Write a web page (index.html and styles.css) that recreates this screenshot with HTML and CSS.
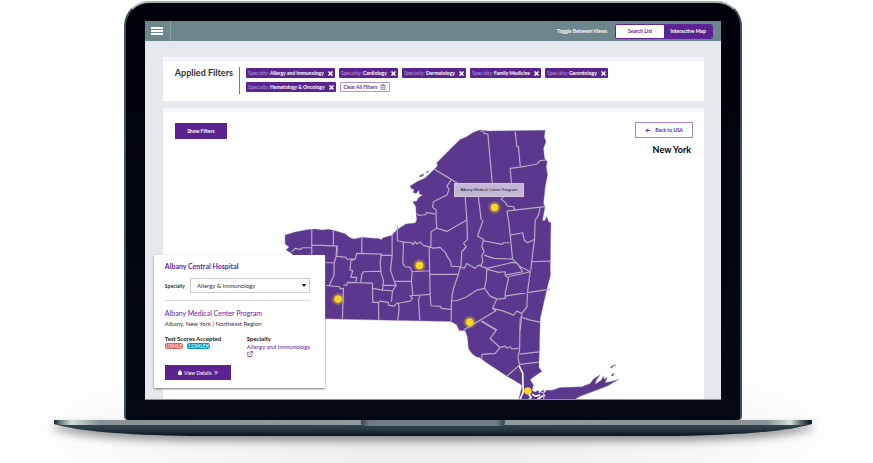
FILE: index.html
```html
<!DOCTYPE html>
<html lang="en">
<head>
<meta charset="utf-8">
<meta name="viewport" content="width=device-width, initial-scale=1">
<title>Residency program map</title>
<link rel="stylesheet" href="styles.css">
</head>
<body>
<main class="laptop">
  <div class="lid">
    <div class="screen">
      <header class="topbar">
        <button class="menu" aria-label="Menu"><span></span><span></span><span></span></button>
        <span class="toggle-label">Toggle Between Views</span>
        <div class="toggle">
          <button class="toggle-btn">Search List</button>
          <button class="toggle-btn active">Interactive Map</button>
        </div>
      </header>
      <div class="content">
        <section class="panel filters">
          <h2 class="filters-title">Applied Filters</h2>
          <div class="chips">
            <button class="chip"><span>Specialty:</span><b>Allergy and Immunology</b><svg viewBox="0 0 10 10"><path d="M1 1l8 8M9 1l-8 8"/></svg></button>
            <button class="chip"><span>Specialty:</span><b>Cardiology</b><svg viewBox="0 0 10 10"><path d="M1 1l8 8M9 1l-8 8"/></svg></button>
            <button class="chip"><span>Specialty:</span><b>Dermatology</b><svg viewBox="0 0 10 10"><path d="M1 1l8 8M9 1l-8 8"/></svg></button>
            <button class="chip"><span>Specialty:</span><b>Family Medicine</b><svg viewBox="0 0 10 10"><path d="M1 1l8 8M9 1l-8 8"/></svg></button>
            <button class="chip"><span>Specialty:</span><b>Gerontology</b><svg viewBox="0 0 10 10"><path d="M1 1l8 8M9 1l-8 8"/></svg></button>
            <button class="chip"><span>Specialty:</span><b>Hematology &amp; Oncology</b><svg viewBox="0 0 10 10"><path d="M1 1l8 8M9 1l-8 8"/></svg></button>
            <button class="chip clear"><b>Clear All Filters</b><svg viewBox="0 0 12 12"><path d="M1 3h10M4 3V1h4v2M2 3v8h8V3M4.500 5v4M7.500 5v4"/></svg></button>
          </div>
        </section>
        <section class="panel stage">
          <svg class="map" viewBox="163 108 541 291" role="img" aria-label="Map of New York counties">
            <defs>
              <radialGradient id="glow"><stop offset=".4" stop-color="#ffd61f" stop-opacity=".6"/><stop offset="1" stop-color="#ffd61f" stop-opacity="0"/></radialGradient>
            </defs>
            <path class="land" d="M285 235L295 232 301.700 230.700 308 229.500 315 229 321.700 230 328.300 229.300 335 230.700 345 233.700 350 237.700 354 239 361.700 237.300 380 238.700 381 240.300 382.300 238 391.700 235.300 396.700 229.700 405.700 224 415 223 416.700 220 416 214 415.700 206.700 412.700 201.700 416.700 201 418 198 422.300 195 419 194 419 190 416 193.500 413 192.500 414 189.500 411 188.500 410 186 416.700 181.700 425 178 433.300 170 437.300 166 436.700 162.700 443.300 156 455 144.300 460 139.500 466 137 472 133 477.300 130.700 480 130 488 131 545 130.300 544 136.700 545.700 141.700 543.300 148.300 544.300 158.300 547 161.700 546 166.700 547.300 175 545 186.700 544 196 543.300 203.300 544.700 207.300 542.300 220 544 221 546.700 216.700 548.300 221.700 550.700 222.700 550 270 550.300 275 546.700 289 540 318.300 538.700 367.300 541.700 371 530 379.300 533.300 385 531.700 390 535 392 538 390 539 393 543 389.500 544 393 546 390 552 390 560 387.300 581.700 386.700 590 383.300 593 379 600 374.500 596 380 595 384 601 380 603 376 604 379 607 377 605 382.500 612 381 618.300 379.300 606.700 386 593.300 391 580 396 573.300 400 518.300 400 521.700 386.700 520.700 384.300 506.700 376 485 361.700 480 357.700 476 356.500 471.700 353.300 468.300 348.300 467.300 336.700 465 330.700 459 330.300 456.700 325 451 321.300 380 320 326 318.700 300 318 300 262 291 253 286 250 289 247 285 244Z"/>
            <path class="land" d="M419 176l4-2 1 1-4 2zM426 172l3-1-2 2zM610 367l3-2 3 0-3 1-2 2zM611 375l2-2 1 1-2 2z"/>
            <path class="water" d="M518.500 365L522.500 373 523 392 519.500 400M531 391l-2 4 2 2-3 3M532 394l3 2 5-1M545 395l-3 1-6 4"/>
            <g class="county" transform="translate(275 120) scale(.33333)">
              <path d="M110 328V420M110 376H140M50 395L60 385 75 388 83 383H110"/>
            </g>
            <g class="county" transform="translate(400 120) scale(.33333)">
              <path d="M240 33L250 33 252 40 263 42 277 200M345 35L350 80 355 80 360 138M438 120L420 122 410 132 380 138 330 145 334 195 305 203 313 225 303 238 315 247 322 258 340 260 344 270M434 260L320 273 325 300M233 220L237 250 243 300M103 148L190 200 195 230 200 300M153 180L140 198 147 208 140 225 100 245 97 262 108 270 108 300M50 280L55 286 75 284 80 277 105 282M420 262L415 285 405 300"/>
            </g>
            <g class="county" transform="translate(320 220) scale(.33333)">
              <path d="M0 76L52 78 50 105M40 33V76M125 52V100M216 45V106M50 78L48 108 78 112 80 117 105 117 110 100 185 102 183 106H215M15 128H42M48 110L42 128V165L28 195M18 196L58 200 60 206 70 205 67 295M70 195H80L82 187 157 189V205M105 117L92 122 90 150 98 152 92 172H110L107 187M122 187L125 163 130 155 183 153M183 106L180 130 183 160 190 180 187 210M157 205L187 210 217 212 214 245M157 205L158 247H175L176 299M175 247L180 243 205 247V255L222 258 230 250 243 248 270 243 277 235 270 227 332 223M216 106L211 150 222 183 274 184M222 183L228 196H190M228 196L217 212M274 184L276 155 327 152M274 184L278 226M327 82L330 223 332 257 362 259 363 265 392 268M231 15L232 62 250 66 248 130 255 140 270 142 276 155M250 66L275 68 278 74 285 65 290 72 300 66 310 76 340 84 360 82 378 100 380 108 392 125 393 138 420 140M348 0L350 24 333 35 332 80M350 24L380 34 440 0 442 58 430 70 438 80 425 95 422 140M300 225L295 240 299 300M235 250L237 265 233 300M330 163L415 162M420 140L415 162 400 205 396 225 394 243M420 140L432 145 440 130 465 145 475 135 500 145 498 180 493 205 470 210 440 230 410 242H394L393 302M489 0L472 48 490 58 485 80 492 95 485 105 488 125 480 138M490 62L545 73 550 68 568 68M492 105L520 115 577 117M565 0L570 45 577 117M570 45L608 38 612 60 622 68 645 57M645 0L643 57 635 120 632 150M500 147L535 157 555 155V165L607 155 592 130 577 127 500 145M577 117L600 140 632 155M632 125L690 123M555 165L565 175 555 220V235L530 237 510 228 493 205M565 170L630 155 622 215M555 228L690 207M530 237L517 265 550 273 580 285 590 273 605 280 620 260 622 215M517 265L527 272 430 330M605 280L600 330M600 290L630 300 660 306M485 303L530 330"/>
            </g>
            <g class="county" transform="translate(380 290) scale(.33333)">
              <path d="M303 93L348 120 330 145 340 155 360 172 345 190 305 193V203M360 172L375 168 380 174 390 170 395 176 415 175M420 85L418 180 413 200 418 225 380 258M418 192L476 185M418 223L476 216M480 305L490 308 491 328"/>
            </g>
            <g fill="url(#glow)"><circle cx="494.500" cy="207.500" r="7"/><circle cx="419.300" cy="265.300" r="7"/><circle cx="338" cy="299" r="7"/><circle cx="469.500" cy="322" r="7"/></g>
            <g fill="#ffd61f"><circle cx="494.500" cy="207.500" r="3.700"/><circle cx="419.300" cy="265.300" r="3.700"/><circle cx="338" cy="299" r="3.700"/><circle cx="469.500" cy="322" r="3.700"/><circle cx="527.500" cy="390.700" r="3.700"/></g>
          </svg>
          <div class="controls">
            <button class="btn show">Show Filters</button>
            <div class="region">
              <button class="btn back"><svg viewBox="0 0 10 10"><path d="M10 5H2M6 1L2 5l4 4"/></svg>Back to USA</button>
              <h1 class="state">New York</h1>
            </div>
          </div>
          <div class="tooltip">Albany Medical Center Program</div>
          <article class="card">
            <h2 class="card-title">Albany Central Hospital</h2>
            <div class="field">
              <label for="specialty">Specialty</label>
              <div class="select-wrap"><select id="specialty"><option>Allergy &amp; Immunology</option></select></div>
            </div>
            <h3 class="program">Albany Medical Center Program</h3>
            <p class="place">Albany, New York | Northeast Region</p>
            <div class="facts">
              <div>
                <h4>Test Scores Accepted</h4>
                <div class="badges"><span class="badge usmle">USMLE</span><span class="badge comlex">COMLEX</span></div>
              </div>
              <div>
                <h4>Specialty</h4>
                <a href="#specialty">Allergy and Immunology <svg viewBox="0 0 12 12"><path d="M5 2.500H1.500V11H9.500V7M7 1h4v4M11 1L5 7"/></svg></a>
              </div>
            </div>
            <button class="btn details"><svg viewBox="0 0 10 12"><path d="M1 5h8v6H1z" fill="currentColor"/><path d="M3 5V3a2 2 0 014 0v2"/></svg>View Details<svg viewBox="0 0 10 10"><path d="M1 1l4 4-4 4M5 1l4 4-4 4"/></svg></button>
          </article>
        </section>
      </div>
    </div>
  </div>
  <svg class="base" viewBox="0 0 758 16" preserveAspectRatio="none" aria-hidden="true">
    <defs>
      <linearGradient id="metal"><stop offset="0" stop-color="#172129"/><stop offset=".008" stop-color="#66757b"/><stop offset=".023" stop-color="#d5dcd9"/><stop offset=".06" stop-color="#899396"/><stop offset=".5" stop-color="#929b9e"/><stop offset=".94" stop-color="#899396"/><stop offset=".972" stop-color="#d5dcd9"/><stop offset=".988" stop-color="#4a585f"/><stop offset="1" stop-color="#070d18"/></linearGradient>
      <linearGradient id="under" x2="0" y2="1"><stop offset=".25" stop-color="#34464d"/><stop offset=".6" stop-color="#253740"/><stop offset="1" stop-color="#09121f"/></linearGradient>
      <linearGradient id="notch"><stop offset="0" stop-color="#36444c"/><stop offset=".06" stop-color="#717d86"/><stop offset=".94" stop-color="#717d86"/><stop offset="1" stop-color="#36444c"/></linearGradient>
    </defs>
    <path fill="url(#under)" d="M0 1H758V4C735 11 690 15 620 16H138C68 15 23 11 0 4Z"/>
    <path fill="url(#metal)" d="M0 0H758V4L750 5H8L0 4Z"/>
    <path fill="url(#notch)" d="M307 0H451V3Q451 6 447 6H311Q307 6 307 3Z"/>
  </svg>
</main>
</body>
</html>
```
FILE: styles.css
```css
:root {
  --purple: #5f259f;
  --purple-dark: #5b2390;
  --slate: #6c868b;
  --ink: #333;
}

* { box-sizing: border-box; }

body {
  margin: 0;
  background: #fff;
  color: var(--ink);
  font: 6px/8px Lato, "Open Sans", sans-serif;
  overflow: hidden;
}

h1, h2, h3, h4, p { margin: 0; }

button, select { font: inherit; color: inherit; }

button {
  display: flex;
  align-items: center;
  justify-content: center;
  border: 0;
  padding: 0;
  background: none;
  cursor: pointer;
}

button svg, a svg { fill: none; stroke: currentColor; }

.laptop {
  display: flex;
  flex-direction: column;
  align-items: center;
  padding: 1px 7px 28px 0;
  background: radial-gradient(ellipse 50% 20% at 50% 93%, #e8e8e8 0%, #f6f6f6 60%, #fff 100%);
}

.lid {
  width: 71.4%;
  padding: 18px 19px 20px;
  border: 2px solid #3c5056;
  border-top-color: #9fb1b1;
  border-bottom: 0;
  border-radius: 25px 25px 4px 4px;
  background: linear-gradient(#00000b, #040914);
}

.screen {
  overflow: hidden;
  background: #e5e9ee;
  border-bottom: 1px solid #8c8f99;
}

.topbar {
  display: flex;
  align-items: center;
  height: 20px;
  padding-right: 8px;
  background: var(--slate);
  color: #fff;
}

.menu {
  flex-direction: column;
  gap: 1px;
  width: 26px;
  height: 20px;
  border-right: 1px solid #8ba0a4;
  margin-right: auto;
}

.menu span { width: 12px; height: 2px; background: #fff; }

.toggle-label { margin-right: 8px; font-size: 5px; font-weight: 700; }

.toggle {
  display: flex;
  height: 15px;
  border: 1px solid var(--purple);
  border-radius: 2px;
  overflow: hidden;
  background: #fff;
}

.toggle-btn { width: 48px; font-size: 5px; font-weight: 700; color: var(--purple); }
.toggle-btn.active { background: var(--purple-dark); color: #fff; }

.content {
  display: flex;
  flex-direction: column;
  gap: 7px;
  padding: 16px 17px 0 18px;
}

.panel { background: #fff; border-top: 4px solid #f5f6f7; }

.filters { display: flex; padding: 6px 12px 7px; }

.filters-title {
  flex: none;
  padding-right: 6px;
  border-right: 1px solid #777;
  margin-right: 6px;
  font-size: 9px;
  line-height: 11px;
}

.chips { display: flex; flex-wrap: wrap; gap: 4px; padding: 1px 0 2px; }

.chip {
  height: 10px;
  padding: 0 2px;
  border-radius: 1px;
  background: var(--purple-dark);
  color: #fff;
  font-size: 5px;
}

.chip span { margin-right: 1px; color: #b99bd6; }
.chip svg { width: 5px; height: 5px; margin-left: 4px; stroke-width: 3; }
.chip.clear { padding: 0 3px; border: 1px solid #b394cf; background: #fff; color: var(--purple); }
.chip.clear svg { width: 6px; height: 6px; margin-left: 3px; stroke-width: 1; }

.stage { position: relative; display: grid; }
.map, .controls { grid-area: 1 / 1; }
.map { display: block; width: 100%; margin-top: -4px; }

.land { fill: #5b378d; stroke: #8f7ab0; stroke-width: .4; }
.water { fill: none; stroke: #fff; stroke-width: 1.600; }
.county path { fill: none; stroke: #b8abc9; stroke-width: 3.600; stroke-linejoin: round; }

.controls {
  display: flex;
  justify-content: space-between;
  align-items: flex-start;
  padding: 10px 11px 10px 12px;
}

.btn { gap: 5px; font-size: 5px; font-weight: 700; }
.show { width: 52px; height: 16px; margin-top: 1px; background: var(--purple-dark); color: #fff; }
.region { display: flex; flex-direction: column; align-items: flex-end; gap: 6px; }
.back { width: 58px; height: 16px; border: 1px solid #a987c9; color: var(--purple); }
.back svg { width: 5px; height: 5px; stroke-width: 2; }
.state { padding-right: 2px; color: #000; font-size: 9px; line-height: 11px; }

.tooltip {
  position: absolute;
  left: 53.700%;
  top: 71px;
  padding: 2px 6px;
  border: 1px solid #d1c8de;
  background: #c4b7d6;
  color: #111;
  font: 4px/8px "Liberation Sans", sans-serif;
  white-space: nowrap;
}

.card {
  position: absolute;
  left: -9px;
  bottom: 11px;
  width: 171px;
  padding: 7px 15px 8px 11px;
  background: #fff;
  box-shadow: 0 1px 2px #777;
}

.card-title { color: var(--purple); font-size: 7px; line-height: 9px; }

.field {
  display: flex;
  align-items: center;
  gap: 5px;
  padding: 7px 0;
  border-bottom: 1px solid #d8d8d8;
  font-size: 5px;
  font-weight: 700;
}

.select-wrap { position: relative; flex: 1; }

.select-wrap::after {
  content: "";
  position: absolute;
  right: 4px;
  top: 6px;
  border: 2px solid transparent;
  border-top: 3px solid #000;
}

select {
  display: block;
  width: 100%;
  height: 15px;
  padding: 0 6px;
  border: 1px solid #ccc;
  border-radius: 0;
  appearance: none;
  background: #fff;
  font-size: 6px;
  font-weight: 400;
}

.program { margin-top: 8px; color: var(--purple); font-size: 7px; font-weight: 400; line-height: 8px; }
.place { margin-top: 3px; }

.facts { display: grid; grid-template-columns: 82px 1fr; margin-top: 7px; }
.facts h4 { color: #222; font-size: 6px; line-height: 8px; }
.facts a { color: var(--purple); text-decoration: none; line-height: 7px; white-space: nowrap; }
.facts a svg { display: block; width: 6px; height: 6px; stroke-width: 1.300; }

.badges { display: flex; gap: 4px; }
.badge { padding: 0 1px; border-radius: 2px; color: #fff; font-size: 5px; line-height: 6px; }
.usmle { background: #e95b5b; }
.comlex { background: #079cc3; }

.details {
  gap: 2px;
  width: 66px;
  height: 15px;
  margin-top: 8px;
  background: var(--purple-dark);
  color: #fff;
  font-weight: 400;
}

.details svg { width: 4px; height: 5px; stroke-width: 2; }

.base {
  display: block;
  width: 87.500%;
  height: 16px;
  filter: drop-shadow(0 5px 4px #0006);
}
```
